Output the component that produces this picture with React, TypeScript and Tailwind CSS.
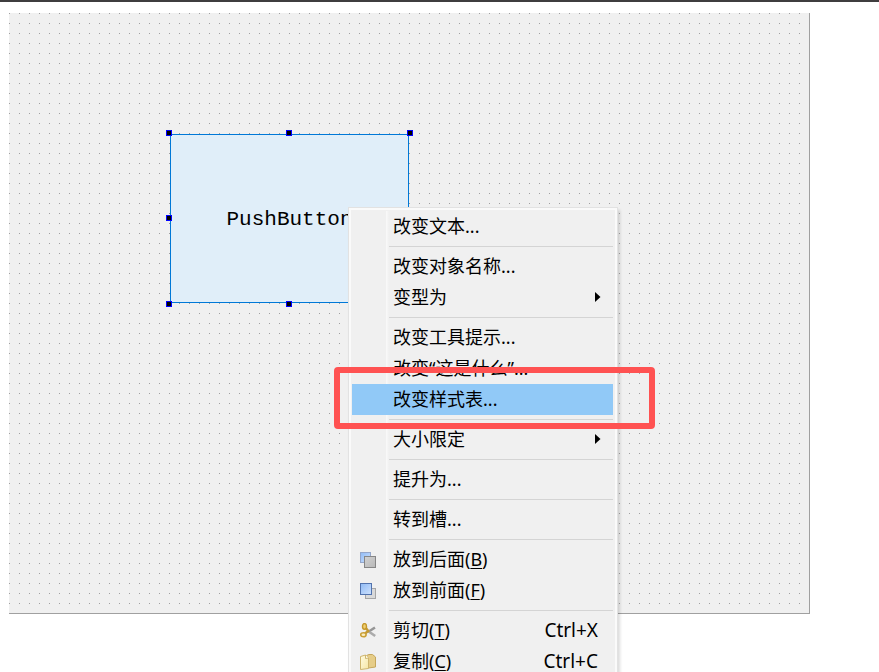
type IconName = 'back' | 'front' | 'cut' | 'copy';

type MenuEntry =
    | { kind: 'separator' }
    | {
          kind: 'item';
          label: string;
          mnemonic?: string;
          shortcut?: string;
          submenu?: boolean;
          active?: boolean;
          icon?: IconName;
      };

const ENTRIES: MenuEntry[] = [
    { kind: 'item', label: '改变文本...' },
    { kind: 'separator' },
    { kind: 'item', label: '改变对象名称...' },
    { kind: 'item', label: '变型为', submenu: true },
    { kind: 'separator' },
    { kind: 'item', label: '改变工具提示...' },
    { kind: 'item', label: '改变“这是什么”...' },
    { kind: 'item', label: '改变样式表...', active: true },
    { kind: 'separator' },
    { kind: 'item', label: '大小限定', submenu: true },
    { kind: 'separator' },
    { kind: 'item', label: '提升为...' },
    { kind: 'separator' },
    { kind: 'item', label: '转到槽...' },
    { kind: 'separator' },
    { kind: 'item', label: '放到后面', mnemonic: 'B', icon: 'back' },
    { kind: 'item', label: '放到前面', mnemonic: 'F', icon: 'front' },
    { kind: 'separator' },
    { kind: 'item', label: '剪切', mnemonic: 'T', shortcut: 'Ctrl+X', icon: 'cut' },
    { kind: 'item', label: '复制', mnemonic: 'C', shortcut: 'Ctrl+C', icon: 'copy' },
];

const HANDLES = [
    '-left-1 -top-1',
    'left-[116px] -top-1',
    '-right-1 -top-1',
    '-left-1 top-[81px]',
    '-right-1 top-[81px]',
    '-left-1 -bottom-1',
    'left-[116px] -bottom-1',
    '-right-1 -bottom-1',
];

function IconGradients() {
    return (
        <svg className="absolute h-0 w-0" aria-hidden="true">
            <defs>
                <linearGradient id="blueFill" x1="0" y1="0" x2="1" y2="1">
                    <stop offset="0" stopColor="#8fbaf5" />
                    <stop offset="1" stopColor="#cfe2fd" />
                </linearGradient>
                <linearGradient id="greyFill" x1="0" y1="0" x2="1" y2="1">
                    <stop offset="0" stopColor="#d2d2d2" />
                    <stop offset="1" stopColor="#b8b8b8" />
                </linearGradient>
                <linearGradient id="pageFill" x1="0" y1="0" x2="1" y2="1">
                    <stop offset="0" stopColor="#fffbe0" />
                    <stop offset="1" stopColor="#f6e6a6" />
                </linearGradient>
            </defs>
        </svg>
    );
}

function MenuIcon({ name }: { name: IconName }) {
    return (
        <svg viewBox="0 0 16 16" className="h-4 w-4" aria-hidden="true">
            {name === 'back' && (
                <>
                    <rect x="0.5" y="0.5" width="10" height="10" fill="url(#blueFill)" stroke="#94a6ca" />
                    <rect x="4.5" y="4.5" width="11" height="11" fill="url(#greyFill)" stroke="#868686" />
                </>
            )}
            {name === 'front' && (
                <>
                    <rect x="5.5" y="5.5" width="10" height="10" fill="#d9d9d9" stroke="#a6a6a6" />
                    <rect x="0.5" y="0.5" width="11" height="11" fill="url(#blueFill)" stroke="#5273ad" />
                </>
            )}
            {name === 'cut' && (
                <>
                    <path d="M8 9 15 4.5" stroke="#969696" strokeWidth="2.6" />
                    <path d="M8 8 15.2 13" stroke="#ababab" strokeWidth="2.6" />
                    <path d="M5.5 4.5 9 9M9 7.5 5 10.5" stroke="#c39a35" strokeWidth="2.4" />
                    <ellipse cx="4.5" cy="3.4" rx="2" ry="2.8" fill="#f0cf72" stroke="#c4982c" strokeWidth="1.4" />
                    <ellipse cx="3.4" cy="11.7" rx="2.7" ry="2" fill="#f8edc4" stroke="#cba036" strokeWidth="1.6" />
                </>
            )}
            {name === 'copy' && (
                <>
                    <path d="M6.5 1.5 9 .5h3.5l3 2.5v10l-7 1z" fill="#e6cd88" stroke="#c5a75c" />
                    <path d="M.5 2.5 5.5 1l3 3v10.5l-8 1z" fill="url(#pageFill)" stroke="#ceb56e" />
                    <path d="M5.5 1v3.5l3-.5" fill="#fffdf0" stroke="#ceb56e" />
                </>
            )}
        </svg>
    );
}

function ContextMenu() {
    return (
        <div
            role="menu"
            className="absolute left-[348px] top-[207px] w-[270px] border border-[#e2e2e2] bg-[#f0f0f0] p-[3px] pr-1 shadow-[inset_0_0_0_2px_#fafafa,2px_3px_3px_rgba(0,0,0,0.14)]"
        >
            <IconGradients />
            <div className="bg-linear-to-r from-transparent from-[34px] via-[#fafafa] via-[34px] to-transparent to-[37px]">
                {ENTRIES.map((entry, i) =>
                    entry.kind === 'separator' ? (
                        <div key={i} role="separator" className="flex h-[9px] items-center pl-[37px]">
                            <div className="h-px w-full bg-[#d4d4d4]" />
                        </div>
                    ) : (
                        <button
                            key={i}
                            type="button"
                            role="menuitem"
                            className={`flex h-[31px] w-full items-center text-left text-[18px] leading-6 text-black ${entry.active ? 'bg-[#91c9f7]' : ''}`}
                        >
                            <span className="flex w-[41px] shrink-0 pt-px pl-2">
                                {entry.icon && <MenuIcon name={entry.icon} />}
                            </span>
                            <span className="flex-1 pb-px whitespace-nowrap">
                                {entry.label}
                                {entry.mnemonic && (
                                    <>
                                        (<span className="underline decoration-1 underline-offset-2">{entry.mnemonic}</span>)
                                    </>
                                )}
                            </span>
                            {entry.shortcut && <span className="pr-[15px] pb-px text-[19px]">{entry.shortcut}</span>}
                            {entry.submenu && (
                                <svg viewBox="0 0 6 10" className="mr-3 mb-px h-[10px] w-[6px]" aria-hidden="true">
                                    <path d="M0 0 5.5 5 0 10z" fill="#000" />
                                </svg>
                            )}
                        </button>
                    )
                )}
            </div>
        </div>
    );
}

export default function App() {
    return (
        <div className="relative flex h-screen flex-col overflow-hidden border-t-2 border-[#3f3d3f] bg-white font-['Noto_Sans','Noto_Sans_CJK_SC',sans-serif]">
            <main className="relative mt-[11px] mr-[69px] mb-[58px] ml-[9px] flex-1 border-r border-b border-[#a0a0a0] bg-[#f0f0f0]">
                <svg className="absolute inset-0 h-full w-full" aria-hidden="true">
                    <defs>
                        <pattern id="grid" width="10" height="10" patternUnits="userSpaceOnUse">
                            <rect width="1" height="1" fill="#a0a0a0" />
                        </pattern>
                    </defs>
                    <rect width="100%" height="100%" fill="url(#grid)" />
                </svg>
                <div className="absolute left-[161px] top-[121px]">
                    <button
                        type="button"
                        className="block h-[169px] w-[239px] border border-[#0078d7] bg-[#e0eef9] pt-0.5 font-['Liberation_Mono',monospace] text-[21px] text-black"
                    >
                        PushButton
                    </button>
                    {HANDLES.map((position) => (
                        <span key={position} className={`absolute h-[6px] w-[6px] border border-[#0000ff] bg-black ${position}`} />
                    ))}
                </div>
            </main>
            <div className="absolute -top-[2px] left-0">
                <ContextMenu />
                <div className="absolute left-[334px] top-[367px] h-[62px] w-[321px] rounded-[4px] border-[6px] border-[#ff5252]" />
            </div>
        </div>
    );
}
